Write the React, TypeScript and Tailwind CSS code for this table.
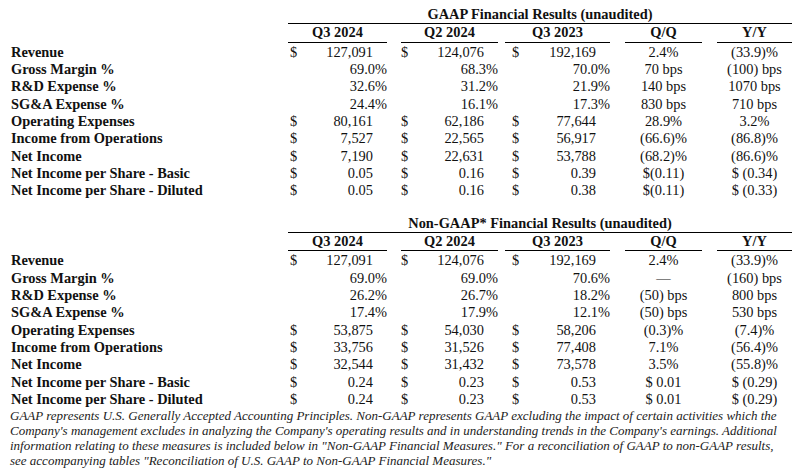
import React from "react";

type Row = { label: string; v: string[] };

const gaap: Row[] = [
  { label: "Revenue", v: ["$127,091", "$124,076", "$192,169", "2.4%", "(33.9)%"] },
  { label: "Gross Margin %", v: ["69.0%", "68.3%", "70.0%", "70 bps", "(100) bps"] },
  { label: "R&D Expense %", v: ["32.6%", "31.2%", "21.9%", "140 bps", "1070 bps"] },
  { label: "SG&A Expense %", v: ["24.4%", "16.1%", "17.3%", "830 bps", "710 bps"] },
  { label: "Operating Expenses", v: ["$80,161", "$62,186", "$77,644", "28.9%", "3.2%"] },
  { label: "Income from Operations", v: ["$7,527", "$22,565", "$56,917", "(66.6)%", "(86.8)%"] },
  { label: "Net Income", v: ["$7,190", "$22,631", "$53,788", "(68.2)%", "(86.6)%"] },
  { label: "Net Income per Share - Basic", v: ["$0.05", "$0.16", "$0.39", "$(0.11)", "$ (0.34)"] },
  { label: "Net Income per Share - Diluted", v: ["$0.05", "$0.16", "$0.38", "$(0.11)", "$ (0.33)"] },
];

const nongaap: Row[] = [
  { label: "Revenue", v: ["$127,091", "$124,076", "$192,169", "2.4%", "(33.9)%"] },
  { label: "Gross Margin %", v: ["69.0%", "69.0%", "70.6%", "\u2014", "(160) bps"] },
  { label: "R&D Expense %", v: ["26.2%", "26.7%", "18.2%", "(50) bps", "800 bps"] },
  { label: "SG&A Expense %", v: ["17.4%", "17.9%", "12.1%", "(50) bps", "530 bps"] },
  { label: "Operating Expenses", v: ["$53,875", "$54,030", "$58,206", "(0.3)%", "(7.4)%"] },
  { label: "Income from Operations", v: ["$33,756", "$31,526", "$77,408", "7.1%", "(56.4)%"] },
  { label: "Net Income", v: ["$32,544", "$31,432", "$73,578", "3.5%", "(55.8)%"] },
  { label: "Net Income per Share - Basic", v: ["$0.24", "$0.23", "$0.53", "$ 0.01", "$ (0.29)"] },
  { label: "Net Income per Share - Diluted", v: ["$0.24", "$0.23", "$0.53", "$ 0.01", "$ (0.29)"] },
];

const headers = ["Q3 2024", "Q2 2024", "Q3 2023", "Q/Q", "Y/Y"];
const outerPad = ["pr-[14px]", "pr-[7px]", "pr-[15px]", "pr-[15px]", "pr-[8px]"];
const dollarPad = ["pl-[2px]", "pl-0", "pl-[7px]"];
const gridCols = "grid grid-cols-[288px_113px_104px_120px_92px_83px]";

function NumCell({ value, col }: { value: string; col: number }) {
  const hasDollar = value.startsWith("$");
  const num = hasDollar ? value.slice(1) : value;
  const isPct = num.endsWith("%");
  return (
    <div className={outerPad[col]}>
      <div className={`flex justify-between ${dollarPad[col]}`}>
        <span>{hasDollar ? "$" : ""}</span>
        <span className={isPct ? "" : "pr-[14px]"}>{num}</span>
      </div>
    </div>
  );
}

function CenterCell({ value, col }: { value: string; col: number }) {
  return (
    <div className={outerPad[col]}>
      <div className="text-center">{value}</div>
    </div>
  );
}

function FinTable({ title, rows, topPad }: { title: string; rows: Row[]; topPad: string }) {
  return (
    <div className={topPad}>
      <div className={gridCols}>
        <div />
        <div className="col-span-5 pr-[8px]">
          <div className="text-center font-bold border-b border-black">{title}</div>
        </div>
        <div />
        {headers.map((h, i) => (
          <div key={h} className={outerPad[i]}>
            <div className="text-center font-bold border-b border-black">{h}</div>
          </div>
        ))}
      </div>
      <div className={`${gridCols} pt-[1px]`}>
        {rows.map((r) => (
          <React.Fragment key={r.label}>
            <div className="pl-[11px] font-bold whitespace-nowrap">{r.label}</div>
            {r.v.map((val, i) =>
              i < 3 ? (
                <NumCell key={i} value={val} col={i} />
              ) : (
                <CenterCell key={i} value={val} col={i} />
              )
            )}
          </React.Fragment>
        ))}
      </div>
    </div>
  );
}

export default function App() {
  return (
    <div className="w-[800px] h-[471px] overflow-hidden bg-white text-[#111] font-['Liberation_Serif','Times_New_Roman',serif] text-[14.4px] leading-[17.33px]">
      <FinTable title="GAAP Financial Results (unaudited)" rows={gaap} topPad="pt-[6px]" />
      <FinTable title="Non-GAAP* Financial Results (unaudited)" rows={nongaap} topPad="pt-[15px]" />
      <div className="pl-[10px] italic text-[13px] leading-[15px] text-[#222] whitespace-nowrap">
        GAAP represents U.S. Generally Accepted Accounting Principles. Non-GAAP represents GAAP excluding the impact of certain activities which the
        <br />
        Company's management excludes in analyzing the Company's operating results and in understanding trends in the Company's earnings. Additional
        <br />
        information relating to these measures is included below in "Non-GAAP Financial Measures." For a reconciliation of GAAP to non-GAAP results,
        <br />
        see accompanying tables "Reconciliation of U.S. GAAP to Non-GAAP Financial Measures."
      </div>
    </div>
  );
}
